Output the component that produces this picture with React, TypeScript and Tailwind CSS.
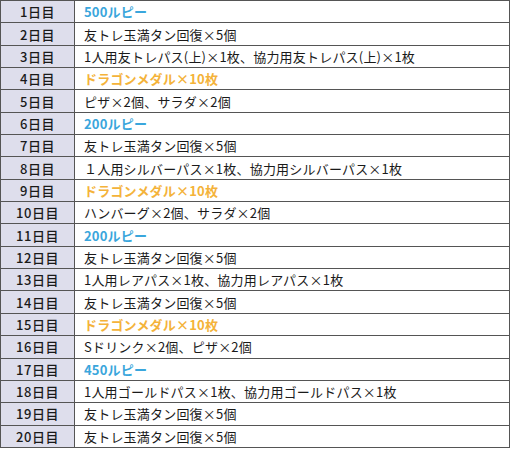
const rows: { day: string; text: string; kind?: "blue" | "orange" }[] = [
  { day: "1日目", text: "500ルピー", kind: "blue" },
  { day: "2日目", text: "友トレ玉満タン回復×5個" },
  { day: "3日目", text: "1人用友トレパス(上)×1枚、協力用友トレパス(上)×1枚" },
  { day: "4日目", text: "ドラゴンメダル×10枚", kind: "orange" },
  { day: "5日目", text: "ピザ×2個、サラダ×2個" },
  { day: "6日目", text: "200ルピー", kind: "blue" },
  { day: "7日目", text: "友トレ玉満タン回復×5個" },
  { day: "8日目", text: "１人用シルバーパス×1枚、協力用シルバーパス×1枚" },
  { day: "9日目", text: "ドラゴンメダル×10枚", kind: "orange" },
  { day: "10日目", text: "ハンバーグ×2個、サラダ×2個" },
  { day: "11日目", text: "200ルピー", kind: "blue" },
  { day: "12日目", text: "友トレ玉満タン回復×5個" },
  { day: "13日目", text: "1人用レアパス×1枚、協力用レアパス×1枚" },
  { day: "14日目", text: "友トレ玉満タン回復×5個" },
  { day: "15日目", text: "ドラゴンメダル×10枚", kind: "orange" },
  { day: "16日目", text: "Sドリンク×2個、ピザ×2個" },
  { day: "17日目", text: "450ルピー", kind: "blue" },
  { day: "18日目", text: "1人用ゴールドパス×1枚、協力用ゴールドパス×1枚" },
  { day: "19日目", text: "友トレ玉満タン回復×5個" },
  { day: "20日目", text: "友トレ玉満タン回復×5個" },
];

export default function App() {
  return (
    <div
      className="w-[512px] h-[450px] bg-white"
      style={{ fontFamily: '"Noto Sans CJK JP", "Noto Sans", sans-serif' }}
    >
      <table className="w-[510px] border-collapse text-[13px] leading-none text-[#1a1a1a]">
        <tbody>
          {rows.map((r) => (
            <tr key={r.day} className="h-[22.35px]">
              <td className="w-[74px] border border-[#555] bg-[#dedeec] p-0 text-center font-medium tracking-[0.5px]">
                {r.day}
              </td>
              <td
                className={
                  "border border-[#555] p-0 pl-[9px] tracking-[0.2px] " +
                  (r.kind === "blue"
                    ? "font-bold text-[#3aa6dc]"
                    : r.kind === "orange"
                      ? "font-bold text-[#f4b33a]"
                      : "")
                }
              >
                {r.text}
              </td>
            </tr>
          ))}
        </tbody>
      </table>
    </div>
  );
}
